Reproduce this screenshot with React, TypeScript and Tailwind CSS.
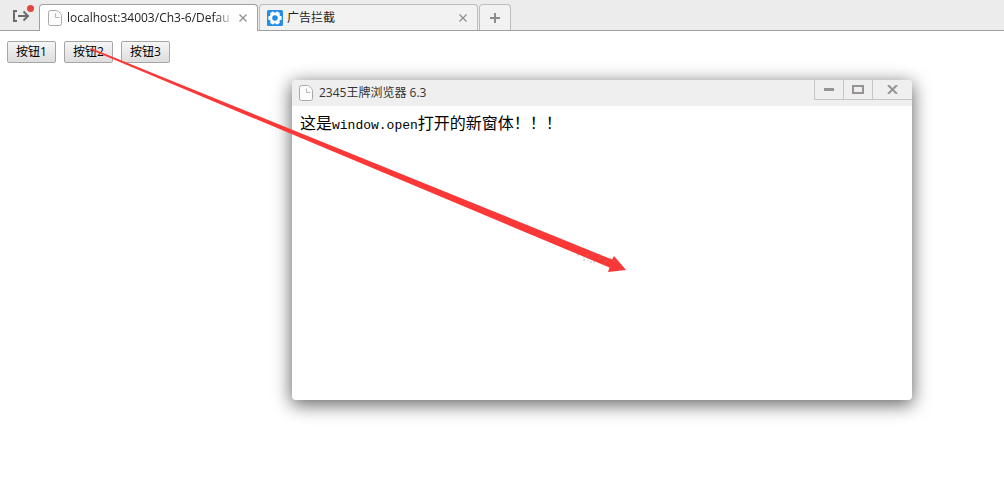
import React from "react";

function PageIcon() {
  return (
    <svg viewBox="0 0 14 16" className="h-4 w-3.5 shrink-0" fill="none" stroke="#a9a9a9" aria-hidden="true">
      <path d="M2.5.5H8.500Q9.500.5 10.500 1.500L12.500 3.500Q13.500 4.500 13.500 5.500V13.500Q13.500 15.500 11.500 15.500H2.500Q.5 15.500.5 13.500V2.500Q.5.5 2.500.5Z" fill="#fcfcfc" />
      <path d="M7.500 3.500V7.500H11.500" stroke="#b4b4b4" />
    </svg>
  );
}

function GearIcon() {
  return (
    <svg viewBox="0 0 16 16" className="size-4 shrink-0" aria-hidden="true">
      <rect width="16" height="16" rx="1.500" fill="#238de8" />
      <g fill="#fff">
        <circle cx="8" cy="8" r="5.500" />
        <rect x="6" y="1.300" width="4" height="13.400" rx=".8" transform="rotate(30 8 8)" />
        <rect x="6" y="1.300" width="4" height="13.400" rx=".8" transform="rotate(90 8 8)" />
        <rect x="6" y="1.300" width="4" height="13.400" rx=".8" transform="rotate(150 8 8)" />
      </g>
      <circle cx="8" cy="8" r="2.800" fill="#238de8" />
    </svg>
  );
}

function CloseIcon() {
  return (
    <svg viewBox="0 0 8 8" className="size-2" stroke="#8c8c8c" strokeWidth="1.200" aria-hidden="true">
      <path d="M.5.5 7.500 7.500M7.500.5.5 7.500" />
    </svg>
  );
}

const buttons = ["按钮1", "按钮2", "按钮3"];

function TabBar() {
  return (
    <header className="flex h-[31px] items-end border-b border-[#a0a0a0] bg-[#ececec] font-['Open_Sans','Noto_Sans_CJK_SC',sans-serif] text-xs text-[#222]">
      <button aria-label="退出" className="flex h-[31px] w-[39px] items-start pt-1 pl-3">
        <svg viewBox="0 0 24 20" className="h-5 w-6" fill="none" stroke="#6b6b6b" strokeWidth="2" aria-hidden="true">
          <path d="M5 8H2V18H5" />
          <path d="M6 13H16M11.500 8.500 16 13 11.500 17.500" />
          <circle cx="18.500" cy="5.500" r="3.500" fill="#e0483e" stroke="none" />
        </svg>
      </button>
      <div className="-mb-px flex h-[27px] w-[219px] shrink-0 items-center rounded-t border border-b-0 border-[#a0a0a0] bg-white pr-2.5 pl-2">
        <PageIcon />
        <span className="ml-[5px] w-[168px] whitespace-nowrap [mask-image:linear-gradient(to_right,black_88%,transparent)]">
          localhost:34003/Ch3-6/Defau
        </span>
        <button aria-label="关闭标签" className="ml-auto">
          <CloseIcon />
        </button>
      </div>
      <div className="ml-px flex h-[26px] w-[219px] shrink-0 items-center rounded-t border border-b-0 border-[#bdbdbd] bg-[#f2f2f2] pr-2.5 pl-[7px]">
        <GearIcon />
        <span className="ml-1">广告拦截</span>
        <button aria-label="关闭标签" className="ml-auto">
          <CloseIcon />
        </button>
      </div>
      <button
        aria-label="新标签"
        className="ml-px flex h-[26px] w-8 shrink-0 items-center justify-center rounded-t border border-b-0 border-[#bdbdbd] bg-[#f2f2f2]"
      >
        <svg viewBox="0 0 10 10" className="size-2.5" stroke="#8c8c8c" strokeWidth="2" aria-hidden="true">
          <path d="M5 0V10M0 5H10" />
        </svg>
      </button>
    </header>
  );
}

function PopupWindow() {
  return (
    <section className="absolute top-20 left-[292px] flex h-80 w-[620px] flex-col rounded-sm bg-white shadow-[0_4px_18px_1px_rgba(0,0,0,0.6)]">
      <div className="flex h-[26px] items-start rounded-t-sm bg-[#efefef] pl-[7px] font-['Open_Sans','Noto_Sans_CJK_SC',sans-serif] text-xs text-[#333]">
        <div className="flex h-[26px] items-center gap-1.5">
          <PageIcon />
          <h1>2345王牌浏览器 6.3</h1>
        </div>
        <div className="ml-auto flex h-5 border-b border-l border-[#c4c4c4]">
          <button aria-label="最小化" className="flex w-7 items-center justify-center">
            <svg viewBox="0 0 10 3" className="h-[3px] w-2.5" aria-hidden="true">
              <path d="M0 0H10V3H0Z" fill="#969296" />
            </svg>
          </button>
          <button aria-label="最大化" className="flex w-[29px] items-center justify-center border-l border-[#c4c4c4]">
            <svg viewBox="0 0 12 9" className="h-[9px] w-3" aria-hidden="true">
              <path d="M1 1H11V8H1Z" fill="none" stroke="#969296" strokeWidth="2" />
            </svg>
          </button>
          <button aria-label="关闭" className="flex w-10 items-center justify-center border-l border-[#c4c4c4]">
            <svg viewBox="0 0 11 9" className="h-[9px] w-[11px]" stroke="#969296" strokeWidth="2" aria-hidden="true">
              <path d="M1 0 10 9M10 0 1 9" />
            </svg>
          </button>
        </div>
      </div>
      <p className="px-2 pt-1 font-['Noto_Sans_CJK_SC',sans-serif] text-base leading-6 text-black">
        这是<span className="font-['Liberation_Mono',monospace] text-[13px]">window.open</span>打开的新窗体！！！
      </p>
    </section>
  );
}

export default function App() {
  return (
    <div className="relative min-h-screen overflow-hidden bg-white">
      <TabBar />
      <main className="flex gap-2 px-[7px] pt-2.5">
        {buttons.map((label) => (
          <button
            key={label}
            className="flex h-[22px] w-[49px] items-center justify-center rounded-xs border border-[#a6a6a6] bg-linear-to-b from-[#f6f6f6] to-[#dddddd] font-['Open_Sans','Noto_Sans_CJK_SC',sans-serif] text-xs whitespace-nowrap text-black"
          >
            {label}
          </button>
        ))}
      </main>
      <PopupWindow />
      <svg viewBox="0 0 546 230" className="pointer-events-none absolute top-[45px] left-20 h-[230px] w-[546px]" aria-hidden="true">
        <path d="M10 3.500 12 3.500 532 214.500 534 211 546 225 528 227 529.500 222.500 10 4.500Z" fill="#fb3838" />
        <path
          d="M497 210H500M504 211V217M508 209V216M512 208H516M510 217H516M520 209V215M524 216H528M530 213L532 215"
          fill="none"
          stroke="#9b8585"
          strokeOpacity=".6"
          strokeDasharray="2 1"
        />
      </svg>
    </div>
  );
}
